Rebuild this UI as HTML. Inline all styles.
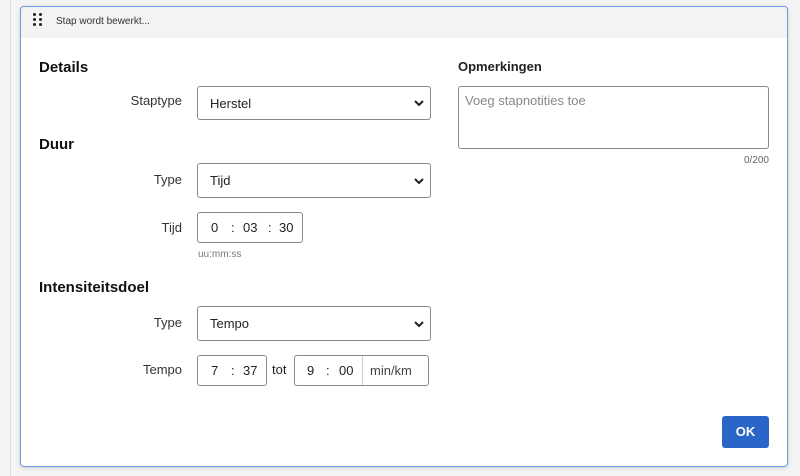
<!DOCTYPE html><html><head><style>
*{box-sizing:border-box;margin:0;padding:0}
body{width:800px;height:476px;background:#f4f4f4;font-family:"Liberation Sans",sans-serif;position:relative;overflow:hidden;color:#222}
.a{position:absolute}
.dlg{left:20px;top:6px;width:768px;height:461px;background:#fff;border:1px solid #6a9be0;border-radius:4px;box-shadow:0 1px 4px rgba(0,0,0,.15)}
.hdr{left:21px;top:7px;width:766px;height:31px;background:#f3f3f3;border-radius:3px 3px 0 0}
h{position:absolute;font-weight:bold;font-size:15px;color:#111}
.lb{position:absolute;font-size:13px;text-align:right;width:100px;color:#333}
.sel{position:absolute;border:1px solid #8a8a8a;border-radius:3px;background:#fff;font-size:13px;padding-left:12px;display:flex;align-items:center}
.sel svg{position:absolute;right:6px;top:50%;margin-top:-3px}
.box{position:absolute;border:1px solid #8a8a8a;border-radius:3px;font-size:13px;display:flex;align-items:center;background:#fff}
</style></head><body>
<div class="a" style="left:10px;top:0;width:1px;height:476px;background:#ddd"></div>
<div class="a dlg"></div>
<div class="a hdr"></div>
<div class="a" style="left:33px;top:13px;width:8px;height:14px">
<div class="a" style="left:0;top:0;width:3px;height:3px;background:#222;border-radius:50%"></div><div class="a" style="left:6px;top:0;width:3px;height:3px;background:#222;border-radius:50%"></div>
<div class="a" style="left:0;top:5px;width:3px;height:3px;background:#222;border-radius:50%"></div><div class="a" style="left:6px;top:5px;width:3px;height:3px;background:#222;border-radius:50%"></div>
<div class="a" style="left:0;top:10px;width:3px;height:3px;background:#222;border-radius:50%"></div><div class="a" style="left:6px;top:10px;width:3px;height:3px;background:#222;border-radius:50%"></div></div>
<div class="a" style="left:56px;top:16px;font-size:10px;color:#333">Stap wordt bewerkt...</div>
<h style="left:39px;top:59px">Details</h>
<div class="lb" style="left:82px;top:93px">Staptype</div>
<div class="sel" style="left:197px;top:86px;width:234px;height:34px">Herstel<svg width="10" height="7"><path d="M1 1l4 4 4-4" stroke="#222" stroke-width="2" fill="none"/></svg></div>
<h style="left:39px;top:136px">Duur</h>
<div class="lb" style="left:82px;top:172px">Type</div>
<div class="sel" style="left:197px;top:163px;width:234px;height:35px">Tijd<svg width="10" height="7"><path d="M1 1l4 4 4-4" stroke="#222" stroke-width="2" fill="none"/></svg></div>
<div class="lb" style="left:82px;top:220px">Tijd</div>
<div class="box" style="left:197px;top:212px;width:106px;height:31px"><span style="position:absolute;left:13px">0</span><span style="position:absolute;left:33px">:</span><span style="position:absolute;left:45px">03</span><span style="position:absolute;left:70px">:</span><span style="position:absolute;left:81px">30</span></div>
<div class="a" style="left:198px;top:249px;font-size:10px;color:#777">uu:mm:ss</div>
<h style="left:39px;top:279px">Intensiteitsdoel</h>
<div class="lb" style="left:82px;top:315px">Type</div>
<div class="sel" style="left:197px;top:306px;width:234px;height:35px">Tempo<svg width="10" height="7"><path d="M1 1l4 4 4-4" stroke="#222" stroke-width="2" fill="none"/></svg></div>
<div class="lb" style="left:82px;top:362px">Tempo</div>
<div class="box" style="left:197px;top:355px;width:70px;height:31px"><span style="position:absolute;left:13px">7</span><span style="position:absolute;left:33px">:</span><span style="position:absolute;left:45px">37</span></div>
<div class="a" style="left:272px;top:362px;font-size:13px">tot</div>
<div class="box" style="left:294px;top:355px;width:135px;height:31px"><span style="position:absolute;left:12px">9</span><span style="position:absolute;left:31px">:</span><span style="position:absolute;left:44px">00</span><div class="a" style="left:67px;top:0;width:1px;height:29px;background:#ccc"></div><span style="position:absolute;left:75px;color:#444">min/km</span></div>
<div class="a" style="left:458px;top:59px;font-size:13px;font-weight:bold;color:#222">Opmerkingen</div>
<div class="box" style="left:458px;top:86px;width:311px;height:63px;align-items:flex-start;padding:6px"><span style="color:#888">Voeg stapnotities toe</span></div>
<div class="a" style="left:730px;top:155px;width:39px;text-align:right;font-size:10px;color:#666">0/200</div>
<div class="a" style="left:722px;top:416px;width:47px;height:32px;background:#2a66c8;border-radius:3px;color:#fff;font-weight:bold;font-size:13px;text-align:center;line-height:32px">OK</div>
</body></html>
